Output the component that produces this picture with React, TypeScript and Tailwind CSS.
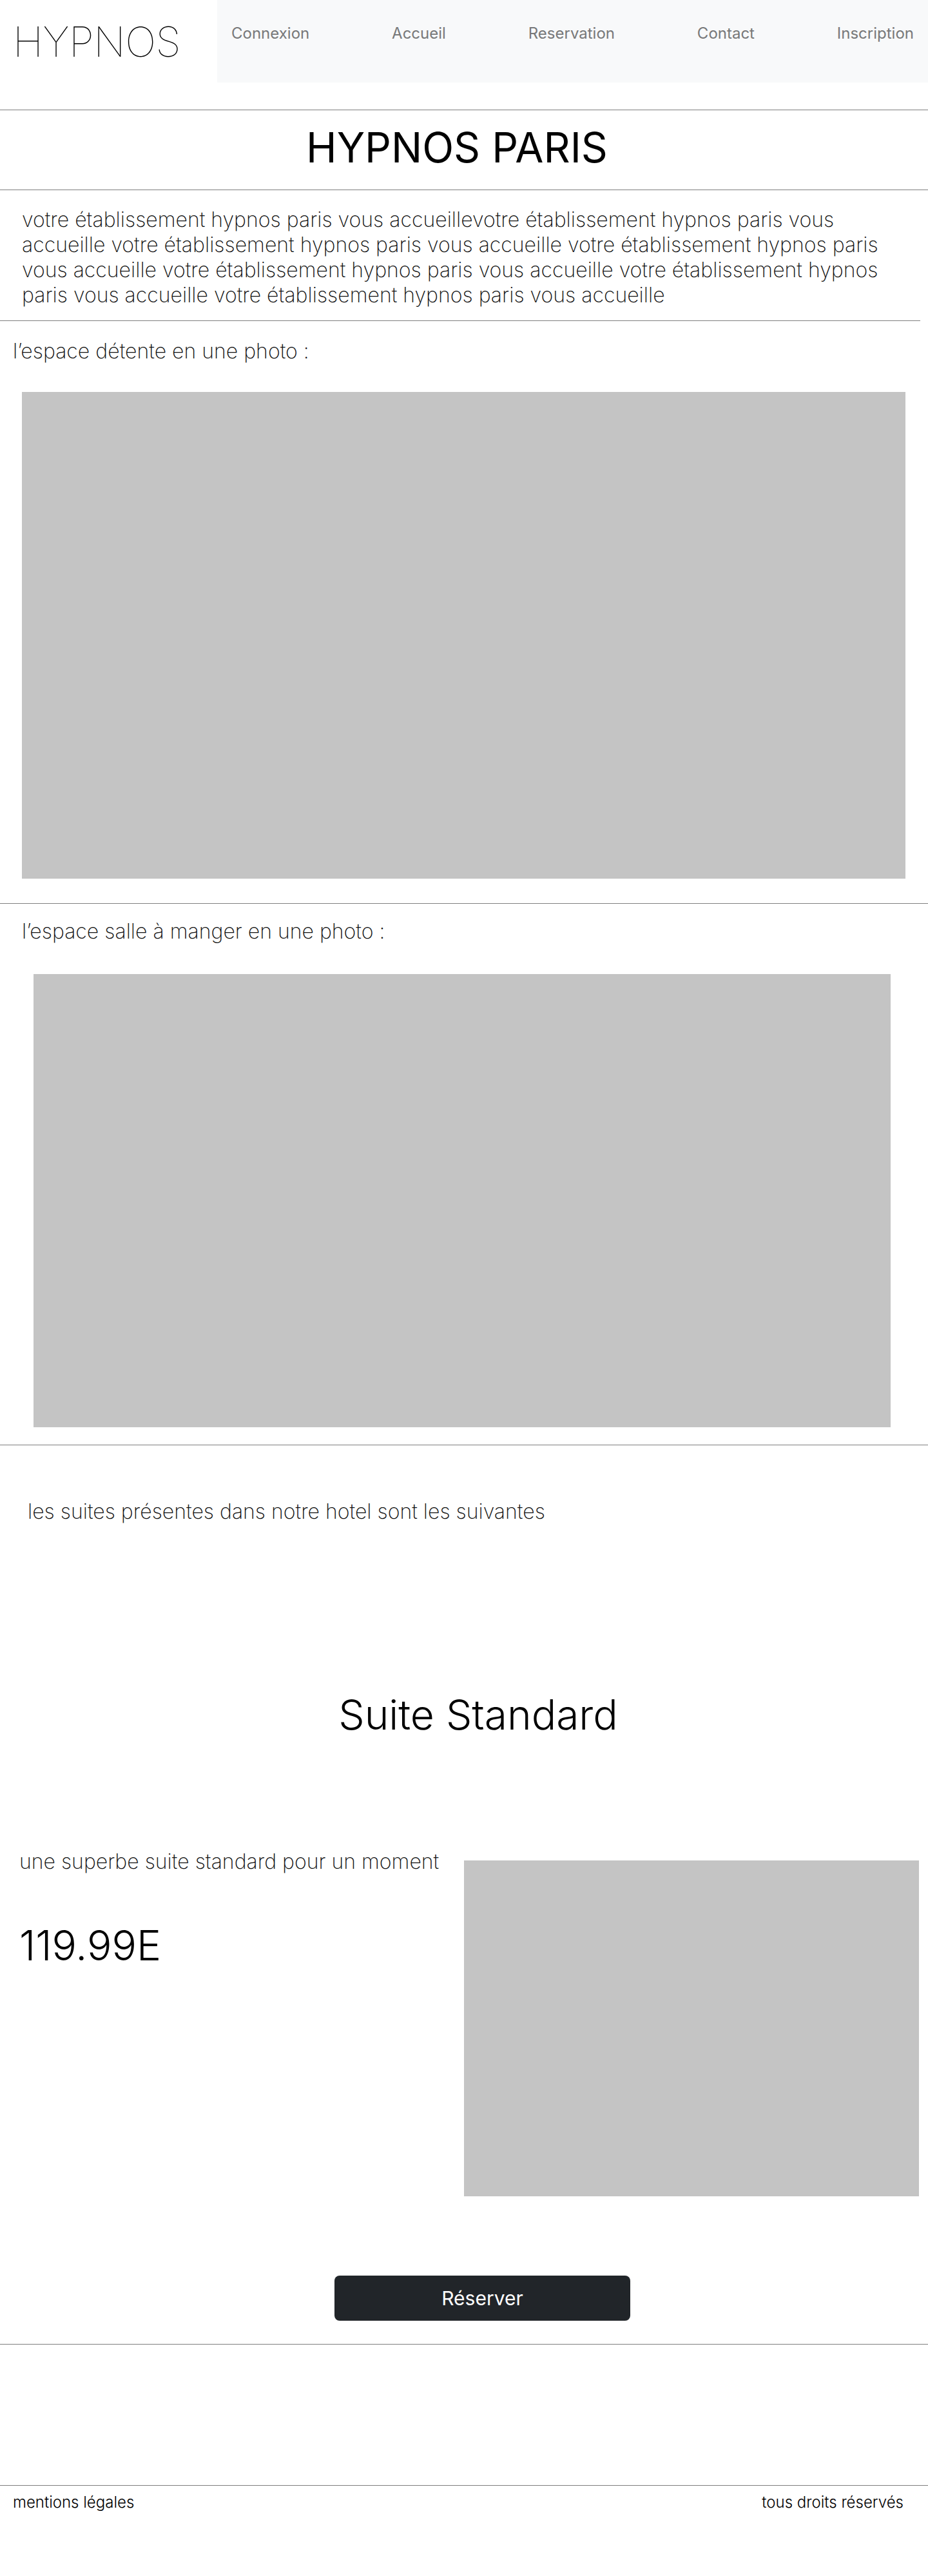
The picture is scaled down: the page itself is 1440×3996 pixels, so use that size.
import React from "react"

const navLinks = ["Connexion", "Accueil", "Reservation", "Contact", "Inscription"]

function Rule({ className = "" }: { className?: string }) {
    return <div className={"h-px bg-[#7f7f7f] " + className} />
}

function Placeholder({ className = "" }: { className?: string }) {
    return <div className={"bg-[#c4c4c4] " + className} />
}

function Header() {
    return (
        <header className="flex h-[128px]">
            <div className="w-[337px] flex items-center pl-[20px]">
                <span className="text-[64px] font-thin text-black tracking-[-0.5px]">HYPNOS</span>
            </div>
            <nav className="flex-1 bg-[#f8f9fa] flex justify-between px-[22px] pt-[37px]">
                {navLinks.map((link) => (
                    <a key={link} href="#" className="text-[24px] h-fit text-[#777879]">
                        {link}
                    </a>
                ))}
            </nav>
        </header>
    )
}

function SuiteCard() {
    return (
        <section>
            <h2 className="text-center text-[64px] font-light text-black pl-[44px] pt-[257px]">Suite Standard</h2>
            <div className="grid grid-cols-2 mt-[170px]">
                <div className="pl-[30px]">
                    <p className="text-[32px] font-extralight">une superbe suite standard pour un moment</p>
                    <p className="text-[64px] font-light text-black mt-[72px]">119.99E</p>
                </div>
                <div className="pt-[18px]">
                    <Placeholder className="w-[706px] h-[521px]" />
                </div>
            </div>
            <div className="flex justify-center pl-[57px] mt-[123px] mb-[36px]">
                <button className="w-[459px] h-[70px] rounded-[8px] bg-[#212529] text-white text-[30px]">
                    Réserver
                </button>
            </div>
        </section>
    )
}

export default function App() {
    return (
        <div className="w-[1440px] min-h-[3996px] bg-white text-[#111111] font-['Inter','Liberation_Sans',sans-serif] leading-[normal]">
            <Header />

            <Rule className="mt-[42px]" />
            <h1 className="text-center text-[64px] text-black pr-[22px] pt-[19px] pb-[27px]">HYPNOS PARIS</h1>

            <Rule />
            <p className="text-[32px] font-extralight pl-[34px] pr-[40px] pt-[26px] pb-[20px]">
                votre établissement hypnos paris vous accueillevotre établissement hypnos paris vous accueille votre établissement hypnos paris vous accueille votre établissement hypnos paris vous accueille votre établissement hypnos paris vous accueille votre établissement hypnos paris vous accueille votre établissement hypnos paris vous accueille
            </p>

            <Rule className="w-[1428px]" />
            <div className="pt-[27px] pb-[38px]">
                <p className="text-[32px] font-extralight pl-[20px]">l’espace détente en une photo :</p>
                <Placeholder className="ml-[34px] mt-[44px] w-[1371px] h-[755px]" />
            </div>

            <Rule />
            <div className="pt-[23px] pb-[27px]">
                <p className="text-[32px] font-extralight pl-[34px]">l’espace salle à manger en une photo :</p>
                <Placeholder className="ml-[52px] mt-[47px] w-[1330px] h-[703px]" />
            </div>

            <Rule />
            <p className="text-[32px] font-extralight pl-[43px] pt-[83px]">les suites présentes dans notre hotel sont les suivantes</p>
            <SuiteCard />

            <Rule />
            <footer className="mt-[218px]">
                <Rule />
                <div className="flex justify-between pl-[20px] pr-[38px] pt-[11px] text-[24px] font-light text-black">
                    <span>mentions légales</span>
                    <span>tous droits réservés</span>
                </div>
            </footer>
        </div>
    )
}
